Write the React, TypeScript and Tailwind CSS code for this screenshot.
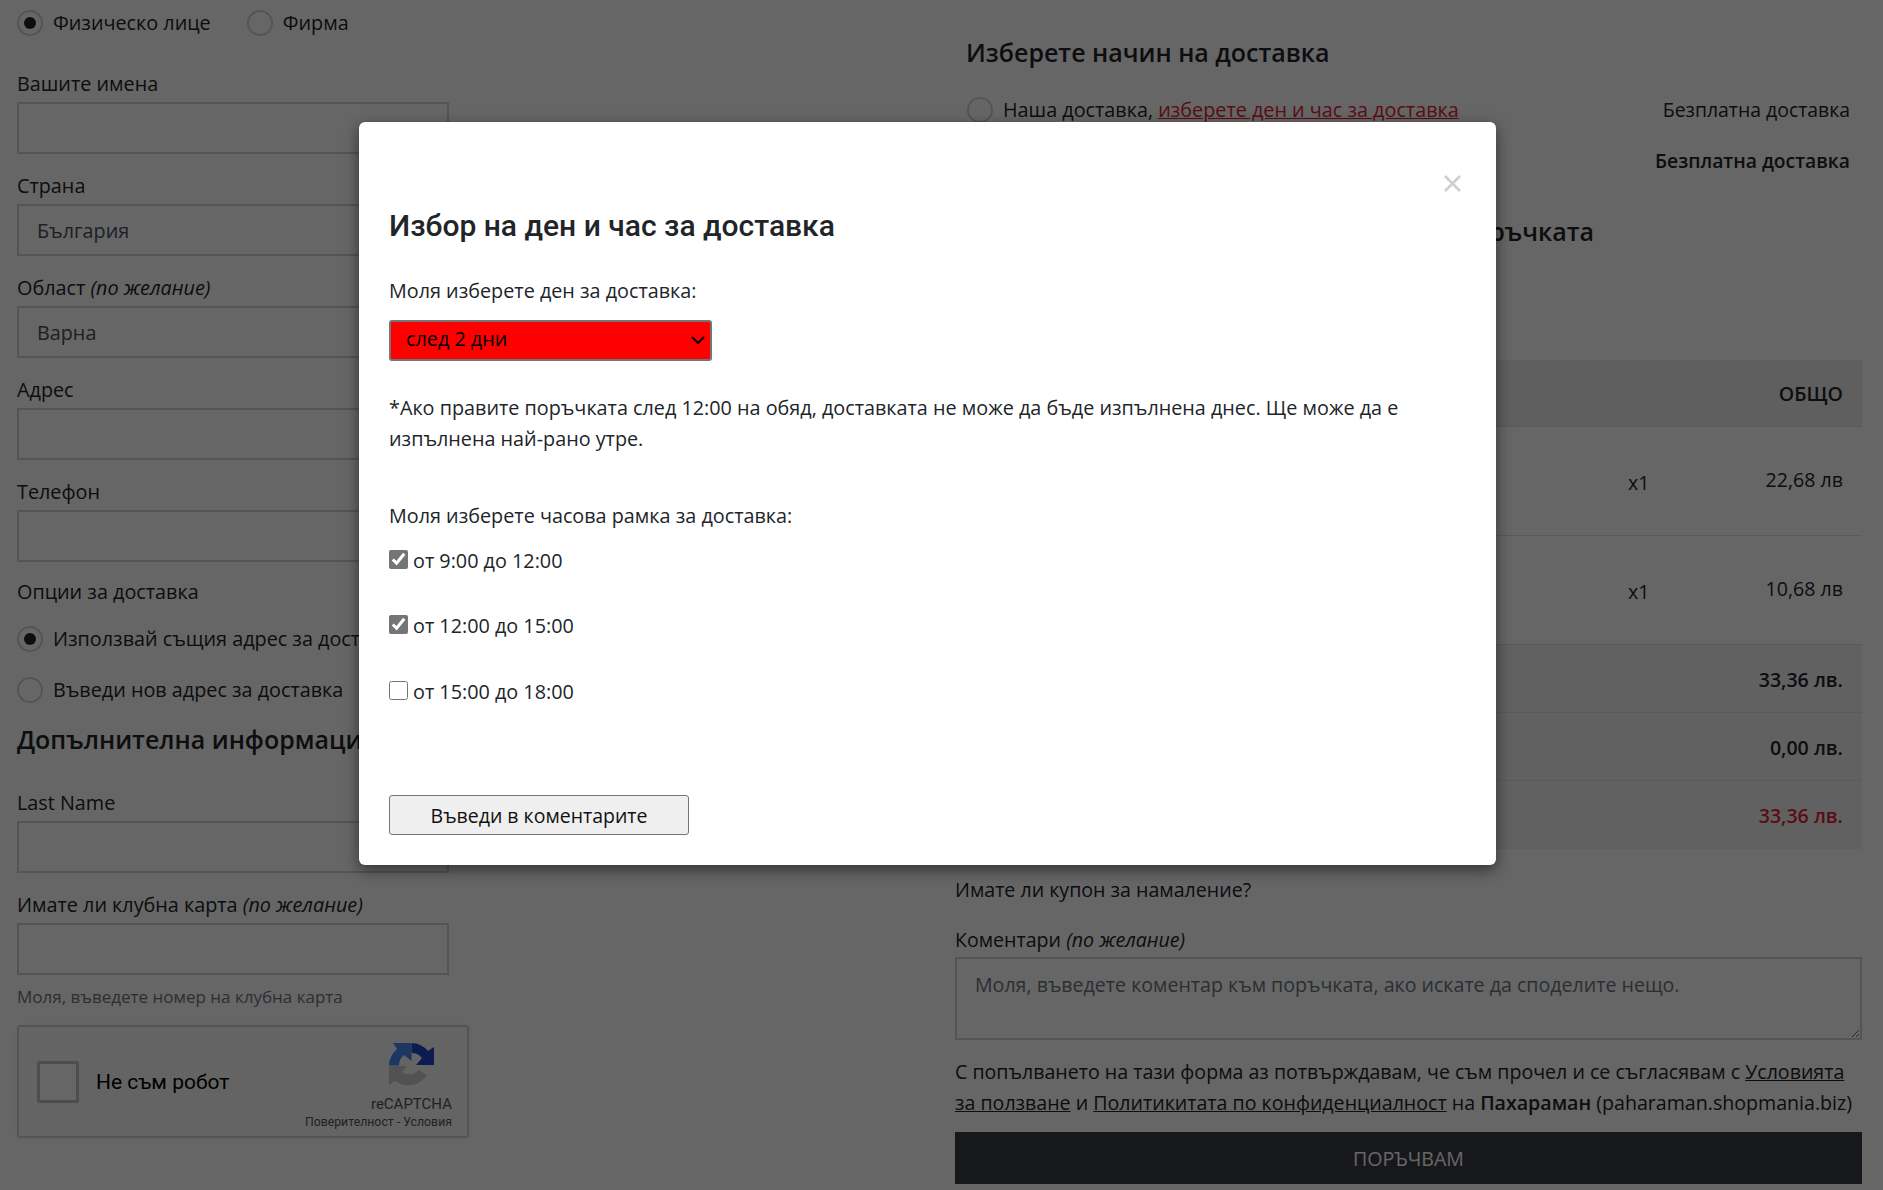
const font = "font-['Open_Sans',sans-serif]";

function Radio({ checked = false }: { checked?: boolean }) {
  return (
    <span className="w-[26px] h-[26px] shrink-0 rounded-full border-2 border-[#ced4da] bg-white flex items-center justify-center">
      {checked && <span className="w-[12px] h-[12px] rounded-full bg-[#212529]" />}
    </span>
  );
}

function Field({ label, optional, value, className = "" }: { label: string; optional?: boolean; value?: string; className?: string }) {
  return (
    <div className={`mb-[19px] ${className}`}>
      <label className="block h-[31px] leading-[26px]">
        {label} {optional && <em>(по желание)</em>}
      </label>
      <div className="w-[432px] h-[52px] border-2 border-[#ced4da] px-[18px] pt-[1px] flex items-center text-[#495057]">{value}</div>
    </div>
  );
}

function SummaryRow({ value, red = false }: { value: string; red?: boolean }) {
  return (
    <div className={`h-[68px] bg-[#f2f2f2] border-b border-[#dee2e6] flex items-center justify-end pr-[19px] pt-[2px] font-semibold ${red ? "text-[#e01e3c] !border-b-0" : ""}`}>
      {value}
    </div>
  );
}

function ItemRow({ price }: { price: string }) {
  return (
    <div className="h-[109px] border-b border-[#dee2e6] flex items-center justify-end pr-[19px]">
      <span className="mr-[116px] mt-[4px]">x1</span>
      <span className="-mt-[2px]">{price}</span>
    </div>
  );
}

function RecaptchaLogo() {
  return (
    <svg width="45" height="45" viewBox="0 0 45 45" className="block mr-[18px]">
      <path d="M22.5 0A22.5 22.5 0 0 1 39 8L45 4V22H27L33 15A13 13 0 0 0 22.5 10Z" fill="#2146c8" />
      <path d="M0 22.5A22.5 22.5 0 0 1 8 6L4 0H22.5V18L15 12A13 13 0 0 0 10 22.5Z" fill="#4a8af4" />
      <path d="M38 32A22.5 22.5 0 0 1 6 38L0 42V23H18L13 29A13 13 0 0 0 30 27Z" fill="#cccccc" />
    </svg>
  );
}

function TimeOption({ label, checked = false, className = "" }: { label: string; checked?: boolean; className?: string }) {
  return (
    <label className={`flex items-center ${className}`}>
      <input type="checkbox" defaultChecked={checked} className="w-[19px] h-[19px] m-0 mr-[5px] -mt-[3px] accent-[#757575]" />
      <span>{label}</span>
    </label>
  );
}

export default function App() {
  return (
    <div className={`relative w-[1883px] h-[1190px] overflow-hidden bg-white text-[#212529] text-[19.8px] ${font}`}>
      <div className="flex">
        {/* Left form */}
        <div className="w-[955px] pl-[17px] pt-[10px]">
          <div className="flex items-center h-[26px] mb-[35px]">
            <Radio checked />
            <span className="ml-[10px] mr-[36px]">Физическо лице</span>
            <Radio />
            <span className="ml-[10px]">Фирма</span>
          </div>
          <Field label="Вашите имена" />
          <Field label="Страна" value="България" />
          <Field label="Област" optional value="Варна" />
          <Field label="Адрес" />
          <Field label="Телефон" className="!mb-[16px]" />
          <div className="h-[30px] leading-[28px] mb-[17px]">Опции за доставка</div>
          <div className="flex items-center h-[27px] mb-[24px]">
            <Radio checked />
            <span className="ml-[10px]">Използвай същия адрес за доставка</span>
          </div>
          <div className="flex items-center h-[27px] mb-[20px]">
            <Radio />
            <span className="ml-[10px]">Въведи нов адрес за доставка</span>
          </div>
          <h3 className="text-[25px] leading-[32px] font-semibold mb-[35px]">Допълнителна информация</h3>
          <Field label="Last Name" />
          <div className="mb-[10px]">
            <label className="block h-[31px] leading-[26px]">
              Имате ли клубна карта <em>(по желание)</em>
            </label>
            <div className="w-[432px] h-[52px] border-2 border-[#ced4da]" />
          </div>
          <p className="text-[17px] leading-[24px] text-[#6c757d] mb-[16px]">Моля, въведете номер на клубна карта</p>
          <div className="relative w-[452px] h-[113px] border-2 border-[#d3d3d3] rounded-[3px] shadow-[0_0_4px_rgba(0,0,0,0.08)] bg-[#f9f9f9] flex items-center font-['Roboto',sans-serif]">
            <span className="w-[42px] h-[42px] ml-[18px] border-[3px] border-[#c1c1c1] rounded-[2px] bg-white" />
            <span className="ml-[17px] text-[#000] text-[21px] mt-[3px]">Не съм робот</span>
            <div className="absolute right-[15px] top-[16px] flex flex-col items-end">
              <RecaptchaLogo />
              <span className="text-[15px] leading-[16px] text-[#555] mt-[8px]">reCAPTCHA</span>
              <span className="text-[12.3px] leading-[14px] text-[#555] mt-[3px] whitespace-nowrap">Поверителност - Условия</span>
            </div>
          </div>
        </div>

        {/* Right column */}
        <div className="w-[907px] text-[19.6px]">
          <h3 className="ml-[11px] mt-[36px] text-[25px] leading-[32px] font-semibold">Изберете начин на доставка</h3>
          <div className="flex items-center h-[27px] mt-[28px] ml-[12px] pr-[12px]">
            <Radio />
            <span className="ml-[10px] text-[19.8px]">
              Наша доставка, <a className="text-[#e01e3c] underline">изберете ден и час за доставка</a>
            </span>
            <span className="ml-auto text-[19.4px]">Безплатна доставка</span>
          </div>
          <div className="text-right pr-[12px] mt-[24px] font-semibold leading-[28px] text-[19.3px]">Безплатна доставка</div>
          <h3 className="w-[639px] text-right mt-[40px] text-[25px] leading-[32px] font-semibold">Вашата поръчката</h3>
          <div className="mt-[113px] h-[67px] bg-[#eeeeee] border-b border-[#dee2e6] flex items-center justify-end pr-[19px] pt-[2px] font-semibold">ОБЩО</div>
          <ItemRow price="22,68 лв" />
          <ItemRow price="10,68 лв" />
          <SummaryRow value="33,36 лв." />
          <SummaryRow value="0,00 лв." />
          <SummaryRow value="33,36 лв." red />
          <div className="mt-[27px] leading-[28px]">Имате ли купон за намаление?</div>
          <label className="block mt-[22px] h-[31px] leading-[28px]">
            Коментари <em>(по желание)</em>
          </label>
          <textarea
            className="block w-full h-[83px] border-2 border-[#ced4da] px-[18px] py-[11px] outline-none placeholder:text-[#6c757d]"
            placeholder="Моля, въведете коментар към поръчката, ако искате да споделите нещо."
          />
          <p className="mt-[16px] leading-[31px]">
            С попълването на тази форма аз потвърждавам, че съм прочел и се съгласявам с <a className="underline">Условията за ползване</a> и <a className="underline">Политикитата по конфиденциалност</a> на <b className="font-semibold">Пахараман</b> (paharaman.shopmania.biz)
          </p>
          <button className="block w-full h-[52px] mt-[14px] bg-[#3b3c46] text-white text-center pt-[1px]">ПОРЪЧВАМ</button>
        </div>
      </div>

      {/* Dark backdrop and modal */}
      <div className="absolute inset-0 bg-black/60 pt-[122px] pl-[359px]">
        <div className="relative w-[1137px] h-[743px] bg-white rounded-[6px] shadow-[0_5px_15px_rgba(0,0,0,0.5)] pl-[30px] pt-[85px]">
          <button className="absolute right-[35px] top-[53px] text-[#cfcfcf]">
            <svg width="17" height="17" viewBox="0 0 17 17" className="block">
              <path d="M1 1l15 15M16 1L1 16" stroke="currentColor" strokeWidth="2.6" fill="none" />
            </svg>
          </button>
          <h4 className="font-['Roboto',sans-serif] text-[30px] leading-[38px] font-medium">Избор на ден и час за доставка</h4>
          <div className="mt-[30px] leading-[31px]">Моля изберете ден за доставка:</div>
          <div className="relative w-[323px] mt-[14px]">
            <select className="block w-full h-[41px] bg-[#ff0000] border-2 border-[#767676] rounded-[3px] pl-[15px] pb-[4px] text-black appearance-none outline-none">
              <option>след 2 дни</option>
            </select>
            <svg width="14" height="9" viewBox="0 0 14 9" className="absolute right-[7px] top-[16px] pointer-events-none">
              <path d="M1 1l6 6 6-6" stroke="#000" strokeWidth="2" fill="none" />
            </svg>
          </div>
          <p className="mt-[31px] w-[1060px] leading-[31px]">
            *Ако правите поръчката след 12:00 на обяд, доставката не може да бъде изпълнена днес. Ще може да е изпълнена най-рано утре.
          </p>
          <div className="mt-[46px] leading-[31px]">Моля изберете часова рамка за доставка:</div>
          <TimeOption label="от 9:00 до 12:00" checked className="mt-[14px] h-[31px]" />
          <TimeOption label="от 12:00 до 15:00" checked className="mt-[34px] h-[31px]" />
          <TimeOption label="от 15:00 до 18:00" className="mt-[35px] h-[31px]" />
          <button className="block w-[300px] h-[40px] mt-[88px] bg-[#efefef] border border-[#767676] rounded-[3px] text-[#111] pt-[1px] text-[19.5px]">Въведи в коментарите</button>
        </div>
      </div>
    </div>
  );
}
